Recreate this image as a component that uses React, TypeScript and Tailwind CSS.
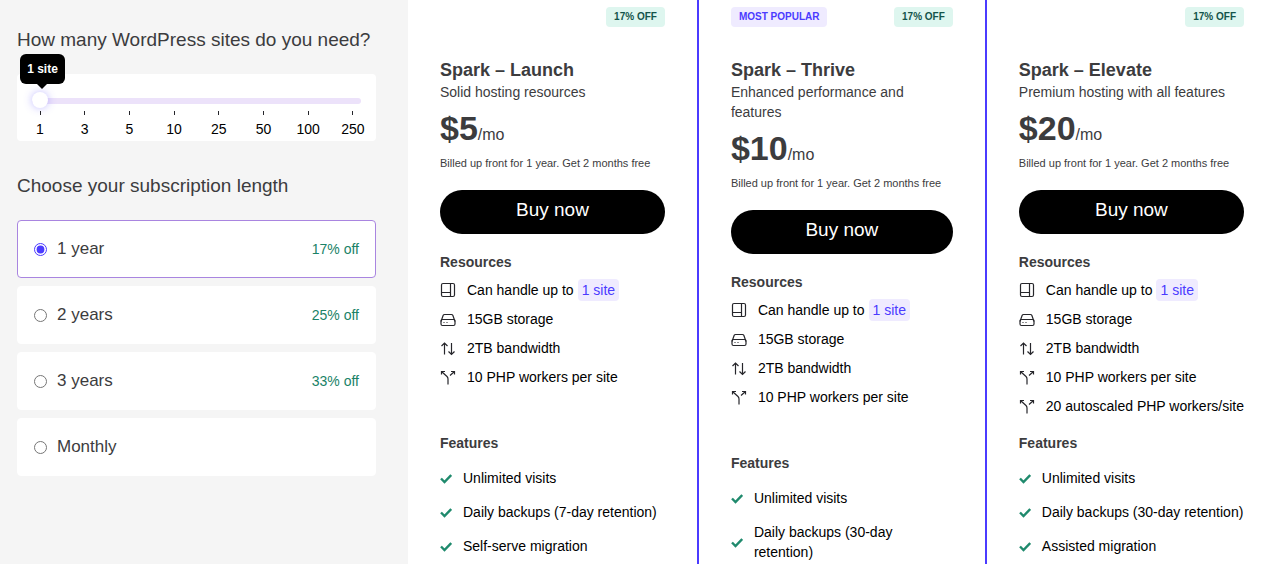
import { useState, type ReactNode } from "react";

type IconName = "sites" | "storage" | "bandwidth" | "workers";

type Resource = {
    icon: IconName;
    text: string;
    badge?: string;
};

type Plan = {
    name: string;
    description: string;
    price: string;
    popular?: boolean;
    resources: Resource[];
    features: string[];
};

const siteCounts = [1, 3, 5, 10, 25, 50, 100, 250];

const terms = [
    { id: "1-year", label: "1 year", discount: "17% off" },
    { id: "2-years", label: "2 years", discount: "25% off" },
    { id: "3-years", label: "3 years", discount: "33% off" },
    { id: "monthly", label: "Monthly", discount: "" },
];

const baseResources: Resource[] = [
    { icon: "sites", text: "Can handle up to", badge: "1 site" },
    { icon: "storage", text: "15GB storage" },
    { icon: "bandwidth", text: "2TB bandwidth" },
    { icon: "workers", text: "10 PHP workers per site" },
];

const plans: Plan[] = [
    {
        name: "Spark – Launch",
        description: "Solid hosting resources",
        price: "$5",
        resources: baseResources,
        features: ["Unlimited visits", "Daily backups (7-day retention)", "Self-serve migration"],
    },
    {
        name: "Spark – Thrive",
        description: "Enhanced performance and features",
        price: "$10",
        popular: true,
        resources: baseResources,
        features: ["Unlimited visits", "Daily backups (30-day retention)"],
    },
    {
        name: "Spark – Elevate",
        description: "Premium hosting with all features",
        price: "$20",
        resources: [...baseResources, { icon: "workers", text: "20 autoscaled PHP workers/site" }],
        features: ["Unlimited visits", "Daily backups (30-day retention)", "Assisted migration"],
    },
];

const iconShapes: Record<IconName, ReactNode> = {
    sites: (
        <>
            <rect x="1.5" y="1.5" width="13" height="13" rx="1.5" />
            <path d="M10.5 1.5v13M1.5 10.5h9" />
        </>
    ),
    storage: (
        <>
            <path d="M1 10.5 3.2 4.3Q3.6 3.5 4.5 3.5h7q.9 0 1.3.8L15 10.5" />
            <rect x="1" y="8.5" width="14" height="6" rx="1.5" />
            <path d="M3.5 11.5h1M6.5 11.5h1" />
        </>
    ),
    bandwidth: <path d="M4.5 14.5V3M1.5 6l3-3 3 3M11.5 3v11.5M8.5 11.5l3 3 3-3" />,
    workers: <path d="M1.5 5.5v-3h3.5M1.5 2.5 7 7.5q1 1 1 2.5V15.5M11 2.5h3.5v3M14.5 2.5 10 6.5" />,
};

function ResourceIcon({ name }: { name: IconName }) {
    return (
        <svg viewBox="0 0 16 16" className="size-4 shrink-0 fill-none stroke-[#26262b]" strokeWidth="1.2" aria-hidden="true">
            {iconShapes[name]}
        </svg>
    );
}

function SiteSlider() {
    const [index, setIndex] = useState(0);
    const count = siteCounts[index];

    return (
        <div className="relative mt-[19px] rounded bg-white px-[15px] pt-[18px] pb-0.5">
            <div className="absolute inset-x-[23px] -top-5">
                <div className="relative" style={{ left: `${(index / (siteCounts.length - 1)) * 100}%` }}>
                    <output
                        htmlFor="sites"
                        className="absolute -left-5 flex h-[30px] min-w-[45px] items-center justify-center rounded-md bg-black px-1 text-xs font-bold whitespace-nowrap text-white"
                    >
                        {count} {count === 1 ? "site" : "sites"}
                    </output>
                    <span className="absolute top-[29px] -left-1 border-x-6 border-t-6 border-x-transparent border-t-black" />
                </div>
            </div>
            <input
                id="sites"
                type="range"
                min={0}
                max={siteCounts.length - 1}
                value={index}
                onChange={(e) => setIndex(Number(e.target.value))}
                className="block h-[18px] w-full appearance-none bg-transparent [&::-webkit-slider-runnable-track]:h-1.5 [&::-webkit-slider-runnable-track]:rounded-full [&::-webkit-slider-runnable-track]:bg-[#ece2fa] [&::-webkit-slider-thumb]:-mt-1.5 [&::-webkit-slider-thumb]:size-4 [&::-webkit-slider-thumb]:appearance-none [&::-webkit-slider-thumb]:rounded-full [&::-webkit-slider-thumb]:bg-white [&::-webkit-slider-thumb]:shadow-[0_0_8px_rgba(75,59,255,0.35)]"
            />
            <div className="mt-px flex justify-between text-sm text-black">
                {siteCounts.map((n) => (
                    <div key={n} className="flex w-4 flex-col items-center">
                        <span className="h-1 w-px bg-[#26262b]" />
                        <span className="mt-1 leading-5">{n}</span>
                    </div>
                ))}
            </div>
        </div>
    );
}

function Sidebar() {
    const [term, setTerm] = useState("1-year");

    return (
        <aside className="w-[408px] shrink-0 bg-[#f5f5f5] pt-[25px] pr-8 pl-[17px]">
            <label htmlFor="sites" className="block text-[19px] leading-[30px]">
                How many WordPress sites do you need?
            </label>
            <SiteSlider />

            <fieldset className="pt-[30px]">
                <legend className="float-left text-[19px] leading-[30px]">Choose your subscription length</legend>
                <div className="clear-both flex flex-col gap-2 pt-[19px]">
                    {terms.map((t) => (
                        <label
                            key={t.id}
                            className={`flex h-[58px] items-center rounded border bg-white px-4 ${term === t.id ? "border-[#a985e0]" : "border-white"}`}
                        >
                            <input
                                type="radio"
                                name="term"
                                value={t.id}
                                checked={term === t.id}
                                onChange={() => setTerm(t.id)}
                                className="size-[13px] accent-[#4b3bff]"
                            />
                            <span className="ml-2.5 text-[17px]">{t.label}</span>
                            <span className="ml-auto text-sm text-[#1a8267]">{t.discount}</span>
                        </label>
                    ))}
                </div>
            </fieldset>
        </aside>
    );
}

function PlanColumn({ plan }: { plan: Plan }) {
    return (
        <section className={`pt-[7px] pl-8 last:pr-[23px] ${plan.popular ? "border-x-2 border-[#4b3bff] pr-8" : "pr-8"}`}>
            <div className="flex h-5 justify-between text-[10px] leading-5 font-bold">
                {plan.popular && <span className="rounded bg-[#efebff] px-2 text-[#4b3bff]">MOST POPULAR</span>}
                <span className="ml-auto rounded bg-[#def6ef] px-2 text-[#14544b]">17% OFF</span>
            </div>

            <h2 className="mt-[31px] text-lg leading-6 font-bold">{plan.name}</h2>
            <p className="text-sm leading-5">{plan.description}</p>
            <p className="mt-1.5 flex items-baseline">
                <span className="text-[34px] leading-10 font-bold">{plan.price}</span>
                <span className="text-base leading-5">/mo</span>
            </p>
            <p className="mt-[5px] text-[11px] leading-5 whitespace-nowrap">Billed up front for 1 year. Get 2 months free</p>
            <button type="button" className="mt-[17px] block h-11 w-full rounded-full bg-black pb-1 text-[19px] text-white">
                Buy now
            </button>

            <h3 className="mt-[18px] text-sm leading-5 font-bold">Resources</h3>
            <ul className="mt-[3px] flex min-h-[145px] flex-col text-sm text-black">
                {plan.resources.map((r) => (
                    <li key={r.text} className="flex h-[29px] items-center gap-[11px] whitespace-nowrap">
                        <ResourceIcon name={r.icon} />
                        <span>
                            {r.text}
                            {r.badge && <span className="ml-1 rounded bg-[#efebff] px-1 py-[3px] text-[#4b3bff]">{r.badge}</span>}
                        </span>
                    </li>
                ))}
            </ul>

            <h3 className="mt-[13px] text-sm leading-5 font-bold">Features</h3>
            <ul className="mt-[15px] flex flex-col gap-3.5 text-sm leading-5 text-black">
                {plan.features.map((f) => (
                    <li key={f} className="flex items-center gap-[11px]">
                        <svg viewBox="0 0 12 12" className="size-3 shrink-0 fill-none stroke-[#1f8a6d]" strokeWidth="2.4" aria-hidden="true">
                            <path d="M1 6.5 4.5 10 11.2 3" />
                        </svg>
                        <span>{f}</span>
                    </li>
                ))}
            </ul>
        </section>
    );
}

export default function App() {
    return (
        <div className="flex h-screen overflow-hidden bg-white font-['Liberation_Sans',Arial,sans-serif] text-[#3c3c3e]">
            <Sidebar />
            <main className="grid grow grid-cols-[289fr_290fr_280fr]">
                {plans.map((plan) => (
                    <PlanColumn key={plan.name} plan={plan} />
                ))}
            </main>
        </div>
    );
}
